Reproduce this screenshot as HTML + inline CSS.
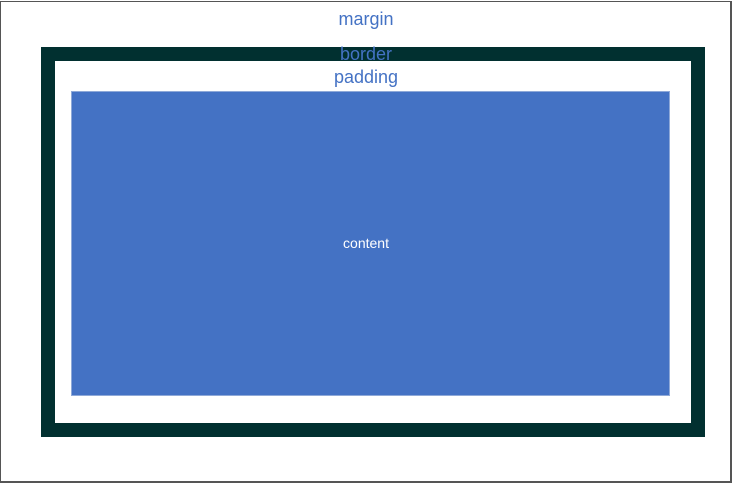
<!DOCTYPE html>
<html><head><style>
html,body{margin:0;padding:0;background:#fff;width:732px;height:483px;overflow:hidden;font-family:"Liberation Sans",sans-serif}
.a{position:absolute;box-sizing:border-box}
.t{position:absolute;left:0;width:732px;text-align:center;color:#4472c4;font-size:18px;line-height:20px}
</style></head><body>
<div class="a" style="left:0;top:1px;width:732px;height:482px;border:1px solid #555;border-right-width:2px;border-bottom-width:2px"></div>
<div class="a" style="left:41px;top:47px;width:664px;height:390px;background:#013030"></div>
<div class="a" style="left:55px;top:61px;width:636px;height:362px;background:#fff"></div>
<div class="a" style="left:71px;top:91px;width:599px;height:305px;background:#4472c4;border:1px solid #8fa9d8"></div>
<div class="t" style="top:9px">margin</div>
<div class="t" style="top:44px">border</div>
<div class="t" style="top:67px">padding</div>
<div class="t" style="top:233px;color:#fff;font-size:14px">content</div>
</body></html>
